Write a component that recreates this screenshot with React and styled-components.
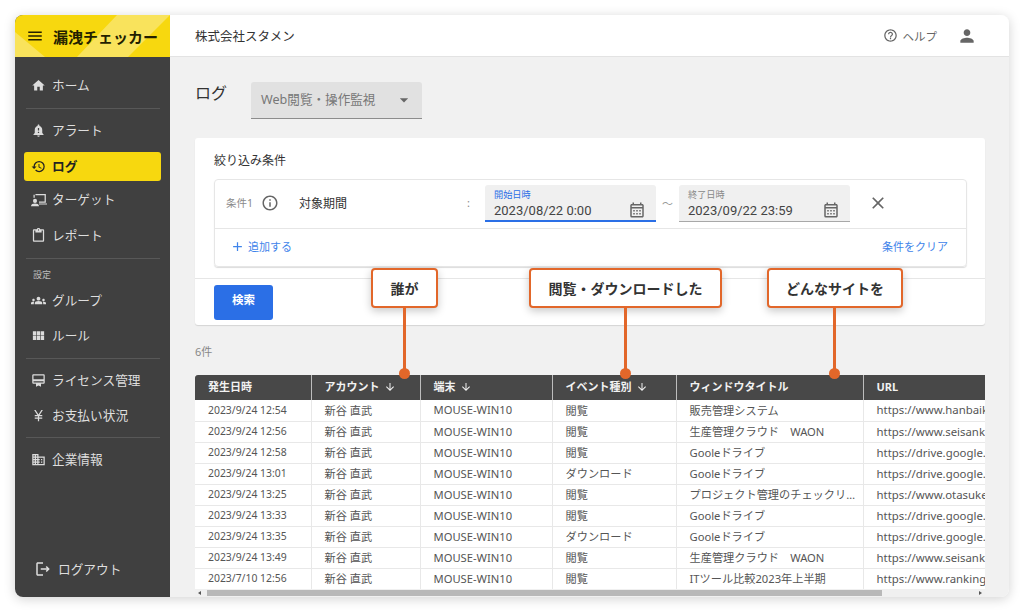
import React from "react";
import styled, { createGlobalStyle } from "styled-components";
import {
  MdMenu, MdHome, MdNotificationImportant, MdHistory, MdOutlineContentPaste, MdGroups, MdViewModule,
  MdOutlineCardMembership, MdCurrencyYen, MdOutlineDomain, MdHelpOutline, MdPerson, MdOutlineCalendarMonth,
  MdInfoOutline, MdClose, MdAdd, MdArrowDownward, MdArrowDropDown, MdOutlineLogout,
} from "react-icons/md";

const FONT = `"Noto Sans", "Noto Sans CJK JP", sans-serif`;

const Global = createGlobalStyle`
  html, body { margin: 0; padding: 0; background: #fff; }
  body { font-family: ${FONT}; width: 1024px; height: 612px; overflow: hidden; }
  * { box-sizing: border-box; }
`;

const Page = styled.div`
  width: 1024px;
  height: 612px;
  padding: 15px;
  background: #fff;
`;
const Frame = styled.div`
  width: 994px;
  height: 582px;
  display: flex;
  border-radius: 8px;
  overflow: hidden;
  box-shadow: 0 2px 12px rgba(0, 0, 0, 0.18);
`;
const Sidebar = styled.aside`
  width: 155px;
  flex: none;
  display: flex;
  flex-direction: column;
  background: #404040;
`;
const Logo = styled.div`
  position: relative;
  height: 42px;
  flex: none;
  display: flex;
  align-items: center;
  gap: 9px;
  padding-left: 11px;
  background: #f7d80f;
  color: #231f00;
`;
const LogoArt = styled.svg`
  position: absolute;
  inset: 0;
`;
const LogoMenu = styled(MdMenu)`
  position: relative;
  font-size: 18px;
`;
const LogoText = styled.span`
  position: relative;
  font-size: 15px;
  font-weight: 700;
  white-space: nowrap;
`;
const Nav = styled.nav`
  flex: 1;
  display: flex;
  flex-direction: column;
  padding: 11px 9px 0;
`;
const Item = styled.div`
  height: ${(p) => p.$h || 35}px;
  margin-top: ${(p) => p.$mt || 0}px;
  flex: none;
  display: flex;
  align-items: center;
  gap: 6px;
  padding: 0 0 2px 7px;
  border-radius: 3px;
  font-size: 12.7px;
  font-weight: ${(p) => (p.$active ? 700 : 400)};
  background: ${(p) => (p.$active ? "#f7d80f" : "transparent")};
  color: ${(p) => (p.$active ? "#222" : "#dedede")};
  svg { font-size: 15px; flex: none; margin-top: 2px; color: ${(p) => (p.$active ? "#222" : "#dcdcdc")}; }
`;
const Divider = styled.div`
  height: 1px;
  flex: none;
  margin: ${(p) => p.$m};
  background: #585858;
`;
const Section = styled.div`
  font-size: 9px;
  color: #bdbdbd;
  padding-left: 9px;
  margin: 9px 0 0;
  line-height: 14px;
  height: 15px;
`;
const Logout = styled.div`
  margin-top: auto;
  height: 38px;
  flex: none;
  display: flex;
  align-items: flex-start;
  gap: 6px;
  padding: 0 0 0 10px;
  font-size: 12.7px;
  line-height: 20px;
  color: #dedede;
  svg { font-size: 18px; margin-top: 1px; }
`;
const Main = styled.main`
  flex: 1;
  min-width: 0;
  display: flex;
  flex-direction: column;
  background: #f1f1f1;
`;
const Header = styled.header`
  height: 42px;
  flex: none;
  display: flex;
  align-items: center;
  padding: 0 32px 0 25px;
  background: #fff;
  border-bottom: 1px solid #e3e3e3;
  font-size: 12.5px;
  color: #333;
`;
const HeaderRight = styled.div`
  margin-left: auto;
  display: flex;
  align-items: center;
  color: #666;
  font-size: 11.5px;
`;
const HelpIcon = styled(MdHelpOutline)`
  font-size: 15px;
  margin-right: 5px;
`;
const UserIcon = styled(MdPerson)`
  font-size: 20px;
  margin-left: 20px;
`;
const Content = styled.div`
  position: relative;
  flex: 1;
  min-height: 0;
  display: flex;
  flex-direction: column;
  padding: 25px 24px 0 25px;
`;
const TitleRow = styled.div`
  display: flex;
  align-items: flex-start;
  height: 56px;
  flex: none;
`;
const Title = styled.h1`
  margin: 0;
  width: 56px;
  font-size: 16px;
  font-weight: 400;
  line-height: 22px;
  color: #333;
`;
const SelectBox = styled.div`
  width: 171px;
  height: 37px;
  display: flex;
  align-items: center;
  justify-content: space-between;
  padding: 0 8px 3px 10px;
  background: #e1e1e1;
  border-bottom: 1px solid #8c8c8c;
  border-radius: 3px 3px 0 0;
  font-size: 12.6px;
  color: #777;
  svg { font-size: 20px; color: #666; margin-top: 2px; }
`;
const Card = styled.section`
  height: 187px;
  flex: none;
  display: flex;
  flex-direction: column;
  background: #fff;
  border-radius: 3px;
  box-shadow: 0 1px 1px rgba(0, 0, 0, 0.12);
`;
const CardTitle = styled.div`
  padding: 14px 19px 0;
  height: 41px;
  flex: none;
  font-size: 12px;
  line-height: 18px;
  color: #333;
`;
const ConditionBox = styled.div`
  margin: 0 18px 0 19px;
  height: 88px;
  flex: none;
  border: 1px solid #e6e6e6;
  border-radius: 4px;
  box-shadow: 0 1px 1px rgba(0, 0, 0, 0.14);
`;
const CondRow = styled.div`
  height: 49px;
  display: flex;
  align-items: center;
  padding: 0 0 2px 11px;
  border-bottom: 1px solid #e6e6e6;
`;
const CondLabel = styled.span`
  width: 31px;
  font-size: 10.5px;
  margin-bottom: 1px;
  color: #8a8a8a;
  white-space: nowrap;
`;
const InfoIcon = styled(MdInfoOutline)`
  font-size: 18px;
  color: #666;
  margin-left: 4px;
`;
const CondName = styled.span`
  margin: 0 0 1px 20px;
  width: 168px;
  font-size: 12px;
  color: #333;
`;
const Colon = styled.span`
  width: 18px;
  font-size: 11px;
  margin-bottom: 1px;
  color: #888;
`;
const DateField = styled.div`
  position: relative;
  width: ${(p) => p.$w}px;
  height: 37px;
  padding: 3px 9px 0;
  background: #f0f0f0;
  border-bottom: ${(p) => (p.$focus ? "2px solid #2b6fe6" : "1px solid #a8a8a8")};
  border-radius: 3px 3px 0 0;
  svg { position: absolute; right: 10px; top: 16px; font-size: 18px; color: #666; }
`;
const DateLabel = styled.div`
  font-size: 9.2px;
  line-height: 13px;
  color: ${(p) => (p.$focus ? "#2b6fe6" : "#888")};
`;
const DateValue = styled.div`
  font-family: Roboto, sans-serif;
  font-size: 13px;
  line-height: 19px;
  color: #444;
`;
const Tilde = styled.span`
  width: 23px;
  text-align: center;
  font-size: 11px;
  color: #999;
`;
const CloseIcon = styled(MdClose)`
  margin-left: 18px;
  font-size: 20px;
  color: #666;
`;
const CondFoot = styled.div`
  height: 37px;
  display: flex;
  align-items: center;
  justify-content: space-between;
  padding: 0 18px 3px 15px;
  font-size: 11px;
  color: #3f84ea;
`;
const AddLink = styled.span`
  display: flex;
  align-items: center;
  gap: 3px;
  svg { font-size: 15px; }
`;
const CardFoot = styled.div`
  margin-top: 11px;
  border-top: 1px solid #e6e6e6;
  padding: 6px 19px 0;
  flex: 1;
`;
const SearchButton = styled.button`
  width: 59px;
  height: 35px;
  border: 0;
  border-radius: 3px;
  padding: 0 0 8px;
  background: #2b6fe6;
  color: #fff;
  font: 700 11.5px ${FONT};
`;
const Count = styled.div`
  height: 50px;
  flex: none;
  padding-top: 19px;
  font-size: 11px;
  line-height: 16px;
  color: #888;
`;
const TableClip = styled.div`
  flex: 1;
  min-height: 0;
  overflow: hidden;
`;
const Table = styled.table`
  width: 930px;
  table-layout: fixed;
  border-collapse: collapse;
  color: #555;
  background: #fff;
`;
const Th = styled.th`
  height: 25px;
  padding: 0 0 3px 13px;
  background: #484848;
  color: #f2f2f2;
  font-size: 11px;
  font-weight: 700;
  text-align: left;
  white-space: nowrap;
  border-left: 1px solid #bdbdbd;
  &:first-child { border-left: 0; border-top-left-radius: 3px; }
  svg { font-size: 12px; margin-left: 4px; vertical-align: -2px; }
`;
const Td = styled.td`
  height: 21px;
  padding: 0 0 1px 13px;
  white-space: nowrap;
  overflow: hidden;
  text-overflow: ${(p) => (p.$clip ? "clip" : "ellipsis")};
  font-size: ${(p) => (p.$small ? 10.4 : p.$clip ? 11.4 : 11.2)}px;
  border-left: 1px solid #e8e8e8;
  border-bottom: 1px solid #e8e8e8;
  &:first-child { border-left: 0; }
`;
const ScrollBar = styled.div`
  height: 8px;
  flex: none;
  display: flex;
  align-items: center;
  justify-content: space-between;
  background: #f0f0f0;
  padding: 0 3px;
  position: relative;
`;
const Arrow = styled.span`
  width: 0;
  height: 0;
  border-top: 2px solid transparent;
  border-bottom: 2px solid transparent;
  border-${(p) => (p.$dir === "left" ? "right" : "left")}: 3px solid #555;
`;
const Thumb = styled.div`
  position: absolute;
  left: 12px;
  top: 1px;
  bottom: 1px;
  width: 675px;
  background: #b8b8b8;
`;
const Callout = styled.div`
  position: absolute;
  top: 211px;
  left: ${(p) => p.$left}px;
  width: ${(p) => p.$w}px;
  height: 40px;
  display: flex;
  align-items: center;
  justify-content: center;
  background: #fff;
  border: 2px solid #e2672a;
  border-radius: 4px;
  box-shadow: 0 3px 8px rgba(0, 0, 0, 0.22);
  font-size: 14px;
  font-weight: 700;
  color: #333;
  white-space: nowrap;
`;
const Stem = styled.div`
  position: absolute;
  top: 251px;
  left: ${(p) => p.$left}px;
  width: 3px;
  height: 65px;
  background: #e2672a;
`;
const Dot = styled.div`
  position: absolute;
  top: 311px;
  left: ${(p) => p.$left}px;
  width: 11px;
  height: 11px;
  border-radius: 50%;
  background: #e2672a;
`;
const TargetSvg = styled.svg`
  margin-right: -1px;
`;

const TargetIcon = () => (
  <TargetSvg width="16" height="14" viewBox="0 0 18 15" fill="none">
    <path d="M5 1.5h11v8.5H9" stroke="currentColor" strokeWidth="1.4" />
    <path d="M9 12h9" stroke="currentColor" strokeWidth="1.4" />
    <circle cx="4.5" cy="8.5" r="2.3" fill="currentColor" />
    <path d="M0 14.5c0-2.2 2-3 4.5-3s4.5.8 4.5 3z" fill="currentColor" />
    <path d="M3.5 1.5V5" stroke="currentColor" strokeWidth="1.4" />
  </TargetSvg>
);

const rows = [
  ["2023/9/24 12:54", "閲覧", "販売管理システム", "https://www.hanbaikanri.example"],
  ["2023/9/24 12:56", "閲覧", "生産管理クラウド　WAON", "https://www.seisankanri.example"],
  ["2023/9/24 12:58", "閲覧", "Gooleドライブ", "https://drive.google.com/drive"],
  ["2023/9/24 13:01", "ダウンロード", "Gooleドライブ", "https://drive.google.com/drive"],
  ["2023/9/24 13:25", "閲覧", "プロジェクト管理のチェックリスト一覧", "https://www.otasuke.example"],
  ["2023/9/24 13:33", "閲覧", "Gooleドライブ", "https://drive.google.com/drive"],
  ["2023/9/24 13:35", "ダウンロード", "Gooleドライブ", "https://drive.google.com/drive"],
  ["2023/9/24 13:49", "閲覧", "生産管理クラウド　WAON", "https://www.seisankanri.example"],
  ["2023/7/10 12:56", "閲覧", "ITツール比較2023年上半期", "https://www.rankingtool.example"],
];

export default function App() {
  return (
    <Page>
      <Global />
      <Frame>
        <Sidebar>
          <Logo>
            <LogoArt width="155" height="42" viewBox="0 0 155 42">
              <polygon points="0,17 0,42 30,42" fill="#f9e35c" />
              <polygon points="102,0 155,0 113,42 62,42" fill="#f9e35c" />
            </LogoArt>
            <LogoMenu />
            <LogoText>漏洩チェッカー</LogoText>
          </Logo>
          <Nav>
            <Item $h={34}><MdHome />ホーム</Item>
            <Divider $m="6px 1px 4px 2px" />
            <Item><MdNotificationImportant />アラート</Item>
            <Item $active $h={29} $mt={4}><MdHistory />ログ</Item>
            <Item $h={37}><TargetIcon />ターゲット</Item>
            <Item $h={34}><MdOutlineContentPaste />レポート</Item>
            <Divider $m="6px 1px 0 2px" />
            <Section>設定</Section>
            <Item><MdGroups />グループ</Item>
            <Item><MdViewModule />ルール</Item>
            <Divider $m="5px 1px 4px 2px" />
            <Item><MdOutlineCardMembership />ライセンス管理</Item>
            <Item><MdCurrencyYen />お支払い状況</Item>
            <Divider $m="4px 1px 4px 2px" />
            <Item><MdOutlineDomain />企業情報</Item>
            <Logout><MdOutlineLogout />ログアウト</Logout>
          </Nav>
        </Sidebar>
        <Main>
          <Header>
            株式会社スタメン
            <HeaderRight>
              <HelpIcon />ヘルプ<UserIcon />
            </HeaderRight>
          </Header>
          <Content>
            <TitleRow>
              <Title>ログ</Title>
              <SelectBox>Web閲覧・操作監視<MdArrowDropDown /></SelectBox>
            </TitleRow>
            <Card>
              <CardTitle>絞り込み条件</CardTitle>
              <ConditionBox>
                <CondRow>
                  <CondLabel>条件1</CondLabel>
                  <InfoIcon />
                  <CondName>対象期間</CondName>
                  <Colon>:</Colon>
                  <DateField $w={171} $focus>
                    <DateLabel $focus>開始日時</DateLabel>
                    <DateValue>2023/08/22 0:00</DateValue>
                    <MdOutlineCalendarMonth />
                  </DateField>
                  <Tilde>〜</Tilde>
                  <DateField $w={171}>
                    <DateLabel>終了日時</DateLabel>
                    <DateValue>2023/09/22 23:59</DateValue>
                    <MdOutlineCalendarMonth />
                  </DateField>
                  <CloseIcon />
                </CondRow>
                <CondFoot>
                  <AddLink><MdAdd />追加する</AddLink>
                  <span>条件をクリア</span>
                </CondFoot>
              </ConditionBox>
              <CardFoot><SearchButton>検索</SearchButton></CardFoot>
            </Card>
            <Count>6件</Count>
            <TableClip>
              <Table>
                <colgroup>
                  <col style={{ width: 116 }} />
                  <col style={{ width: 109 }} />
                  <col style={{ width: 132 }} />
                  <col style={{ width: 124 }} />
                  <col style={{ width: 187 }} />
                  <col style={{ width: 262 }} />
                </colgroup>
                <thead>
                  <tr>
                    <Th>発生日時</Th>
                    <Th>アカウント<MdArrowDownward /></Th>
                    <Th>端末<MdArrowDownward /></Th>
                    <Th>イベント種別<MdArrowDownward /></Th>
                    <Th>ウィンドウタイトル</Th>
                    <Th>URL</Th>
                  </tr>
                </thead>
                <tbody>
                  {rows.map((r, i) => (
                    <tr key={i}>
                      <Td $small>{r[0]}</Td>
                      <Td>新谷 直武</Td>
                      <Td>MOUSE-WIN10</Td>
                      <Td>{r[1]}</Td>
                      <Td>{r[2]}</Td>
                      <Td $clip>{r[3]}</Td>
                    </tr>
                  ))}
                </tbody>
              </Table>
            </TableClip>
            <ScrollBar>
              <Arrow $dir="left" /><Thumb /><Arrow />
            </ScrollBar>
            <Callout $left={201} $w={67}>誰が</Callout>
            <Stem $left={233} />
            <Dot $left={229} />
            <Callout $left={359} $w={193}>閲覧・ダウンロードした</Callout>
            <Stem $left={454} />
            <Dot $left={450} />
            <Callout $left={597} $w={136}>どんなサイトを</Callout>
            <Stem $left={663} />
            <Dot $left={659} />
          </Content>
        </Main>
      </Frame>
    </Page>
  );
}
